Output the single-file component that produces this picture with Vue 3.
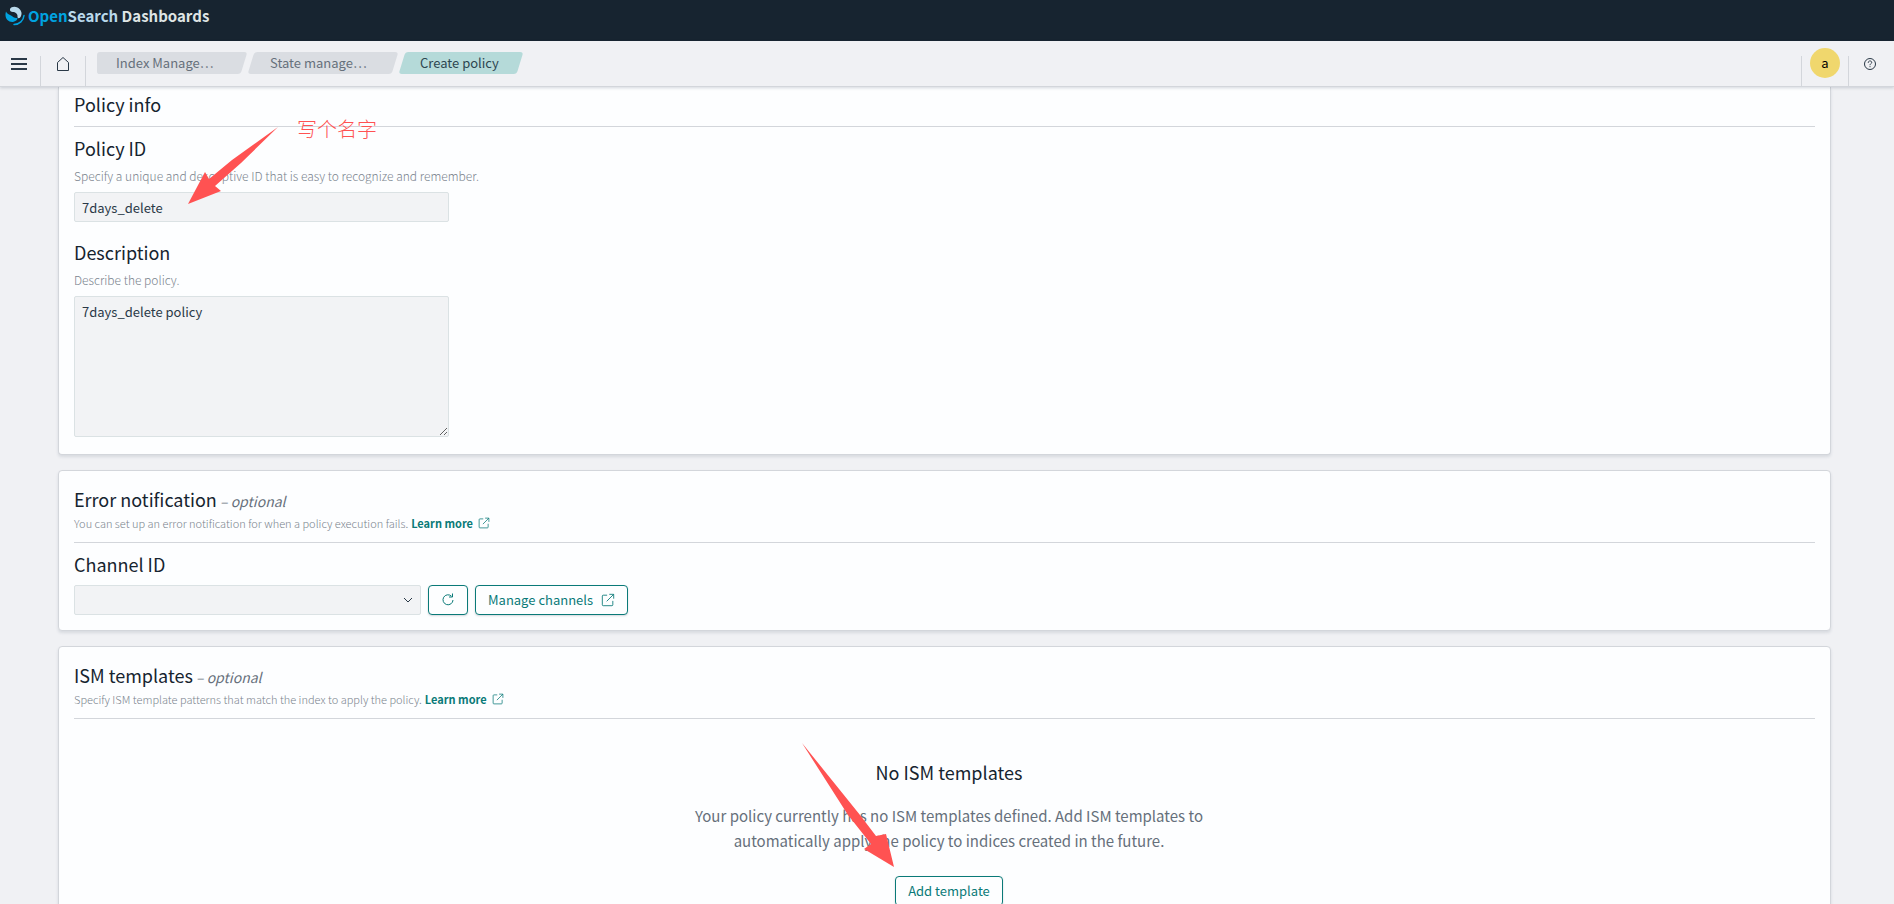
<script setup>
import { ref } from 'vue'

const breadcrumbs = [
  { text: 'Index Manage…', href: '#/indices' },
  { text: 'State manage…', href: '#/index-policies' },
]

const policyId = ref('7days_delete')
const description = ref('7days_delete policy')
const channelId = ref('')
</script>

<template>
  <div class="page">
    <header class="header">
      <a href="#/" class="brand">
        <svg class="brand-mark" viewBox="0 0 20 20" aria-hidden="true">
          <path fill="#00a3e0" d="M1 5.500C-1 12 3 16.500 8 16C11 15.500 13 13.500 12.500 11.500C11 13 8 11 6 9.500C4 8.500 2 8 1 5.500Z" />
          <path fill="#b9d9eb" d="M5 3C6 0.500 10 0 12.500 1.500C16 3.500 17.500 7 16 10C15 12.500 13 13 12.500 11C13 7.500 10 6 8 6C6 6 4.500 5 5 3Z" />
          <path fill="none" stroke="#00a3e0" stroke-width="1.5" stroke-linecap="round" d="M19 9.500C18.500 14.500 14.500 18.500 9 18.500" />
        </svg>
        <span><span class="open">Open</span><span class="search">Search</span> Dashboards</span>
      </a>
    </header>

    <nav class="toolbar">
      <button type="button" class="nav-btn menu" aria-label="Menu">
        <svg width="16" height="16" viewBox="0 0 16 16">
          <path stroke="#2a3947" stroke-width="2" d="M0 3h16M0 8h16M0 13h16" />
        </svg>
      </button>
      <a href="#/" class="nav-btn home" aria-label="Home">
        <svg width="16" height="16" viewBox="0 0 16 16" fill="none" stroke="#2a3947">
          <path d="M2.500 14.500v-8L8 1.500l5.500 5v8z" />
        </svg>
      </a>
      <div class="breadcrumbs">
        <a v-for="(item, index) in breadcrumbs" :key="index" :href="item.href" class="crumb">
          <span>{{ item.text }}</span>
        </a>
        <span class="crumb current"><span>Create policy</span></span>
      </div>
      <div class="nav-right">
        <button type="button" class="nav-btn user"><span class="avatar">a</span></button>
        <button type="button" class="nav-btn help" aria-label="Help">
          <svg width="14" height="14" viewBox="0 0 14 14" fill="none" stroke="#2a3947">
            <circle cx="7" cy="7" r="5.500" />
            <path d="M5.200 5.800C5.200 3.300 8.800 3.500 8.700 5.500C8.600 6.700 7 6.700 7 8.200M7 9.200v1" />
          </svg>
        </button>
      </div>
    </nav>

    <main class="content">
      <section class="card first">
        <h2 class="title">Policy info</h2>
        <hr />
        <label class="title" for="policy-id">Policy ID</label>
        <p class="help-text">
          Specify a unique and descriptive ID that is easy to recognize and remember.
        </p>
        <input id="policy-id" v-model="policyId" type="text" class="field" />
        <label class="title second" for="description">Description</label>
        <p class="help-text">Describe the policy.</p>
        <textarea id="description" v-model="description" class="field area"></textarea>
      </section>

      <section class="card">
        <h2 class="title">Error notification<i class="optional"> – optional</i></h2>
        <p class="subtitle">
          You can set up an error notification for when a policy execution fails.
          <a href="#/docs/error-notifications" class="learn">
            Learn more
            <svg width="12" height="12" viewBox="0 0 16 16" fill="none" stroke="currentColor">
              <path d="M7 2.500H2.500a1 1 0 0 0-1 1v10a1 1 0 0 0 1 1h10a1 1 0 0 0 1-1V9M6.500 9.500l8-8M9.500 1.500h5v5" />
            </svg>
          </a>
        </p>
        <hr />
        <label class="title channel-label" for="channel">Channel ID</label>
        <div class="channel-row">
          <div class="select-wrap">
            <select id="channel" v-model="channelId" class="field">
              <option value=""></option>
            </select>
            <svg class="chevron" width="10" height="6" viewBox="0 0 10 6" fill="none" stroke="#2a3947">
              <path d="M1 1l4 4 4-4" />
            </svg>
          </div>
          <button type="button" class="btn refresh" aria-label="Refresh">
            <svg width="14" height="14" viewBox="0 0 14 14" fill="none" stroke="currentColor">
              <path d="M10.500 3.200A5 5 0 1 0 12 7M11.500 0.500v3.500H8" />
            </svg>
          </button>
          <button type="button" class="btn">
            Manage channels
            <svg width="14" height="14" viewBox="0 0 16 16" fill="none" stroke="currentColor">
              <path d="M7 2.500H2.500a1 1 0 0 0-1 1v10a1 1 0 0 0 1 1h10a1 1 0 0 0 1-1V9M6.500 9.500l8-8M9.500 1.500h5v5" />
            </svg>
          </button>
        </div>
      </section>

      <section class="card">
        <h2 class="title">ISM templates<i class="optional"> – optional</i></h2>
        <p class="subtitle">
          Specify ISM template patterns that match the index to apply the policy.
          <a href="#/docs/ism-templates" class="learn">
            Learn more
            <svg width="12" height="12" viewBox="0 0 16 16" fill="none" stroke="currentColor">
              <path d="M7 2.500H2.500a1 1 0 0 0-1 1v10a1 1 0 0 0 1 1h10a1 1 0 0 0 1-1V9M6.500 9.500l8-8M9.500 1.500h5v5" />
            </svg>
          </a>
        </p>
        <hr />
        <div class="empty-wrap">
          <div class="empty">
            <h3 class="title">No ISM templates</h3>
            <p>
              Your policy currently has no ISM templates defined. Add ISM templates to
              automatically apply the policy to indices created in the future.
            </p>
            <button type="button" class="btn">Add template</button>
            <svg class="arrow arrow-template" width="94" height="126" viewBox="0 0 94 126">
              <path fill="#ff5252" d="M0 0L58 72L74 93L84 91L92 124L62 106L69 101L46 72Z" />
            </svg>
          </div>
        </div>
      </section>
    </main>

    <!-- Notes drawn over the form -->
    <svg class="arrow arrow-name" width="92" height="78" viewBox="0 0 92 78">
      <path fill="#ff5252" d="M90 0L44 33L21 52L17 45L0 77L33 64L27 59L53 36Z" />
    </svg>
    <span class="note">写个名字</span>
  </div>
</template>

<style>
body {
  background: #f0f1f4;
  overflow: hidden;
}
</style>

<style scoped>
.page {
  position: relative;
  display: flex;
  flex-direction: column;
  height: 100vh;
  overflow: hidden;
  color: #16242f;
  font-family: 'Noto Sans CJK SC', sans-serif;
  font-size: 13px;
  line-height: 20px;
}

.page * {
  box-sizing: border-box;
}

.header {
  flex: none;
  height: 41px;
  padding: 4px 5px;
  background: #172430;
}

.brand {
  display: flex;
  align-items: center;
  gap: 3px;
  color: #dfe5e4;
  font-size: 15px;
  font-weight: 700;
  line-height: 24px;
  text-decoration: none;
}

.brand-mark {
  width: 20px;
  height: 20px;
}

.open {
  color: #00a3e0;
}

.search {
  color: #b9d9eb;
}

.toolbar {
  position: relative;
  z-index: 1;
  flex: none;
  display: flex;
  align-items: flex-end;
  height: 46px;
  background: #f0f1f4;
  border-bottom: 1px solid #d3d6db;
  box-shadow: 0 1px 3px rgba(40, 60, 80, 0.2);
}

.nav-btn {
  display: flex;
  align-items: center;
  justify-content: center;
  width: 45px;
  height: 30px;
  padding: 0 0 14px;
  background: none;
  border: 0 solid #d3d6db;
  border-right-width: 1px;
}

.menu {
  width: 41px;
  padding-right: 3px;
}

.breadcrumbs {
  display: flex;
  align-self: flex-start;
  margin: 11px 0 0 11px;
}

.crumb {
  position: relative;
  width: 151px;
  height: 22px;
  padding: 0 22px;
  color: #66707b;
  line-height: 21px;
  text-decoration: none;
}

.crumb::before {
  content: '';
  position: absolute;
  inset: 0 4px 0 3px;
  background: #dadde2;
  border-radius: 3px;
  transform: skewX(-17deg);
}

.crumb:first-child {
  padding-left: 19px;
}

.crumb:first-child::after {
  content: '';
  position: absolute;
  inset: 0 auto 0 0;
  width: 12px;
  background: #dadde2;
  border-radius: 3px 0 0 3px;
}

.crumb span {
  position: relative;
}

.crumb.current {
  width: 125px;
  padding-left: 21px;
  color: #2d4650;
}

.crumb.current::before {
  background: #b5dad9;
}

.nav-right {
  display: flex;
  margin-left: auto;
}

.nav-right .nav-btn {
  width: 46px;
  border-width: 0 0 0 1px;
}

.nav-right .user {
  width: 47px;
}

.nav-right .help {
  padding-right: 3px;
}

.avatar {
  flex: none;
  width: 30px;
  height: 30px;
  margin-top: -2px;
  background: #f0d76d;
  border-radius: 50%;
  font: 13px/30px 'Noto Sans CJK SC', sans-serif;
}

.content {
  flex: 1;
  min-height: 0;
  overflow: hidden;
  padding: 0 63px 0 58px;
}

.card {
  padding: 15px;
  margin-bottom: 15px;
  background: #fdfeff;
  border: 1px solid #d3d6db;
  border-radius: 4px;
  box-shadow: 0 2px 3px rgba(40, 60, 80, 0.12);
}

.card.first {
  padding-top: 4px;
  padding-bottom: 17px;
  border-top: 0;
  border-radius: 0 0 4px 4px;
}

.title {
  display: block;
  margin: 0;
  color: #16242f;
  font-size: 18px;
  font-weight: 400;
  line-height: 26px;
}

.optional {
  color: #66707b;
  font-size: 14px;
  line-height: 20px;
}

hr {
  height: 1px;
  margin: 9px 0 8px;
  background: #d3d6db;
  border: 0;
}

.help-text,
.subtitle {
  margin: 0;
  color: #7b848e;
  font-weight: 300;
  line-height: 20px;
}

.help-text {
  margin: 5px 0 6px;
  font-size: 12px;
}

.subtitle {
  display: flex;
  gap: 3px;
  padding-top: 1px;
  font-size: 11px;
}

.field {
  display: block;
  width: 375px;
  height: 30px;
  padding: 0 7px;
  color: #2a3947;
  background: #f2f3f5;
  border: 1px solid #dbe2e4;
  border-radius: 2px;
  font: 13px/20px 'Noto Sans CJK SC', sans-serif;
  outline: none;
}

.second {
  margin-top: 17px;
}

.area {
  height: 141px;
  padding: 5px 7px;
}

.channel-label {
  margin-bottom: 8px;
}

.learn {
  display: flex;
  align-items: center;
  gap: 5px;
  color: #0a7a78;
  font-weight: 700;
  text-decoration: none;
}

.channel-row {
  display: flex;
  gap: 7px;
}

.select-wrap {
  position: relative;
}

.select-wrap .field {
  width: 347px;
  appearance: none;
}

.chevron {
  position: absolute;
  top: 12px;
  right: 8px;
}

.btn {
  display: inline-flex;
  align-items: center;
  gap: 8px;
  height: 30px;
  padding: 0 12px;
  color: #0a7a78;
  background: #fdfeff;
  border: 1px solid #0a7a78;
  border-radius: 4px;
  box-shadow: 0 1px 2px rgba(40, 60, 80, 0.2);
  font: 13px/20px 'Noto Sans CJK SC', sans-serif;
}

.empty-wrap {
  display: flex;
  justify-content: center;
  padding: 0 0 24px 9px;
}

.empty {
  position: relative;
  width: 530px;
  padding-top: 32px;
  text-align: center;
}

.empty p {
  margin: 18px 0 23px;
  color: #66707b;
  font-size: 15px;
  line-height: 25px;
}

.arrow {
  position: absolute;
}

.arrow-name {
  top: 127px;
  left: 188px;
}

.arrow-template {
  top: 16px;
  left: 118px;
}

.note {
  position: absolute;
  top: 117px;
  left: 297px;
  color: #ff5252;
  font-size: 20px;
  font-weight: 300;
  line-height: 24px;
}
</style>
